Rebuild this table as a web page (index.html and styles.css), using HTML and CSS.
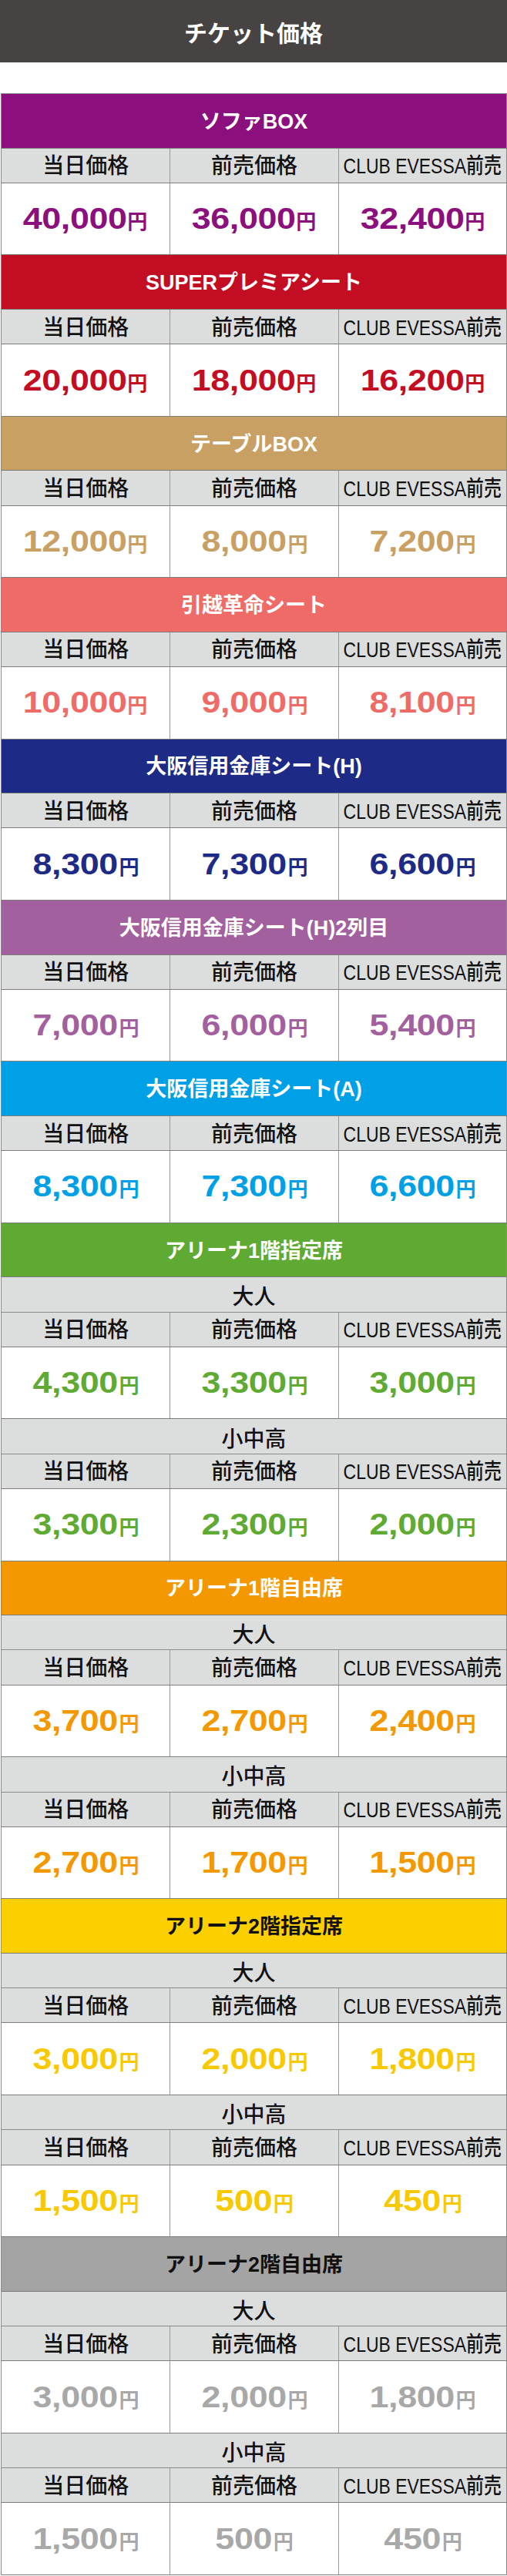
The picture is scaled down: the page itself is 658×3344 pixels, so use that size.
FILE: index.html
```html
<!DOCTYPE html>
<html lang="ja">
<head>
<meta charset="utf-8">
<title>チケット価格</title>
<link rel="stylesheet" href="styles.css">
</head>
<body>
<h1 class="page-title">チケット価格</h1>
<div class="ticket-table">

  <section class="seat seat--sofa">
    <h2 class="seat-name">ソファBOX</h2>
    <div class="row labels"><div class="cell">当日価格</div><div class="cell">前売価格</div><div class="cell"><span class="club">CLUB EVESSA前売</span></div></div>
    <div class="row prices"><div class="cell"><span class="amount">40,000<span class="yen">円</span></span></div><div class="cell"><span class="amount">36,000<span class="yen">円</span></span></div><div class="cell"><span class="amount">32,400<span class="yen">円</span></span></div></div>
  </section>

  <section class="seat seat--super">
    <h2 class="seat-name">SUPERプレミアシート</h2>
    <div class="row labels"><div class="cell">当日価格</div><div class="cell">前売価格</div><div class="cell"><span class="club">CLUB EVESSA前売</span></div></div>
    <div class="row prices"><div class="cell"><span class="amount">20,000<span class="yen">円</span></span></div><div class="cell"><span class="amount">18,000<span class="yen">円</span></span></div><div class="cell"><span class="amount">16,200<span class="yen">円</span></span></div></div>
  </section>

  <section class="seat seat--table">
    <h2 class="seat-name">テーブルBOX</h2>
    <div class="row labels"><div class="cell">当日価格</div><div class="cell">前売価格</div><div class="cell"><span class="club">CLUB EVESSA前売</span></div></div>
    <div class="row prices"><div class="cell"><span class="amount">12,000<span class="yen">円</span></span></div><div class="cell"><span class="amount">8,000<span class="yen">円</span></span></div><div class="cell"><span class="amount">7,200<span class="yen">円</span></span></div></div>
  </section>

  <section class="seat seat--hikkoshi">
    <h2 class="seat-name">引越革命シート</h2>
    <div class="row labels"><div class="cell">当日価格</div><div class="cell">前売価格</div><div class="cell"><span class="club">CLUB EVESSA前売</span></div></div>
    <div class="row prices"><div class="cell"><span class="amount">10,000<span class="yen">円</span></span></div><div class="cell"><span class="amount">9,000<span class="yen">円</span></span></div><div class="cell"><span class="amount">8,100<span class="yen">円</span></span></div></div>
  </section>

  <section class="seat seat--shinkin-h">
    <h2 class="seat-name">大阪信用金庫シート(H)</h2>
    <div class="row labels"><div class="cell">当日価格</div><div class="cell">前売価格</div><div class="cell"><span class="club">CLUB EVESSA前売</span></div></div>
    <div class="row prices"><div class="cell"><span class="amount">8,300<span class="yen">円</span></span></div><div class="cell"><span class="amount">7,300<span class="yen">円</span></span></div><div class="cell"><span class="amount">6,600<span class="yen">円</span></span></div></div>
  </section>

  <section class="seat seat--shinkin-h2">
    <h2 class="seat-name">大阪信用金庫シート(H)2列目</h2>
    <div class="row labels"><div class="cell">当日価格</div><div class="cell">前売価格</div><div class="cell"><span class="club">CLUB EVESSA前売</span></div></div>
    <div class="row prices"><div class="cell"><span class="amount">7,000<span class="yen">円</span></span></div><div class="cell"><span class="amount">6,000<span class="yen">円</span></span></div><div class="cell"><span class="amount">5,400<span class="yen">円</span></span></div></div>
  </section>

  <section class="seat seat--shinkin-a">
    <h2 class="seat-name">大阪信用金庫シート(A)</h2>
    <div class="row labels"><div class="cell">当日価格</div><div class="cell">前売価格</div><div class="cell"><span class="club">CLUB EVESSA前売</span></div></div>
    <div class="row prices"><div class="cell"><span class="amount">8,300<span class="yen">円</span></span></div><div class="cell"><span class="amount">7,300<span class="yen">円</span></span></div><div class="cell"><span class="amount">6,600<span class="yen">円</span></span></div></div>
  </section>

  <section class="seat seat--arena1-reserved">
    <h2 class="seat-name">アリーナ1階指定席</h2>
    <div class="age">大人</div>
    <div class="row labels"><div class="cell">当日価格</div><div class="cell">前売価格</div><div class="cell"><span class="club">CLUB EVESSA前売</span></div></div>
    <div class="row prices"><div class="cell"><span class="amount">4,300<span class="yen">円</span></span></div><div class="cell"><span class="amount">3,300<span class="yen">円</span></span></div><div class="cell"><span class="amount">3,000<span class="yen">円</span></span></div></div>
    <div class="age">小中高</div>
    <div class="row labels"><div class="cell">当日価格</div><div class="cell">前売価格</div><div class="cell"><span class="club">CLUB EVESSA前売</span></div></div>
    <div class="row prices"><div class="cell"><span class="amount">3,300<span class="yen">円</span></span></div><div class="cell"><span class="amount">2,300<span class="yen">円</span></span></div><div class="cell"><span class="amount">2,000<span class="yen">円</span></span></div></div>
  </section>

  <section class="seat seat--arena1-free">
    <h2 class="seat-name">アリーナ1階自由席</h2>
    <div class="age">大人</div>
    <div class="row labels"><div class="cell">当日価格</div><div class="cell">前売価格</div><div class="cell"><span class="club">CLUB EVESSA前売</span></div></div>
    <div class="row prices"><div class="cell"><span class="amount">3,700<span class="yen">円</span></span></div><div class="cell"><span class="amount">2,700<span class="yen">円</span></span></div><div class="cell"><span class="amount">2,400<span class="yen">円</span></span></div></div>
    <div class="age">小中高</div>
    <div class="row labels"><div class="cell">当日価格</div><div class="cell">前売価格</div><div class="cell"><span class="club">CLUB EVESSA前売</span></div></div>
    <div class="row prices"><div class="cell"><span class="amount">2,700<span class="yen">円</span></span></div><div class="cell"><span class="amount">1,700<span class="yen">円</span></span></div><div class="cell"><span class="amount">1,500<span class="yen">円</span></span></div></div>
  </section>

  <section class="seat seat--arena2-reserved">
    <h2 class="seat-name">アリーナ2階指定席</h2>
    <div class="age">大人</div>
    <div class="row labels"><div class="cell">当日価格</div><div class="cell">前売価格</div><div class="cell"><span class="club">CLUB EVESSA前売</span></div></div>
    <div class="row prices"><div class="cell"><span class="amount">3,000<span class="yen">円</span></span></div><div class="cell"><span class="amount">2,000<span class="yen">円</span></span></div><div class="cell"><span class="amount">1,800<span class="yen">円</span></span></div></div>
    <div class="age">小中高</div>
    <div class="row labels"><div class="cell">当日価格</div><div class="cell">前売価格</div><div class="cell"><span class="club">CLUB EVESSA前売</span></div></div>
    <div class="row prices"><div class="cell"><span class="amount">1,500<span class="yen">円</span></span></div><div class="cell"><span class="amount">500<span class="yen">円</span></span></div><div class="cell"><span class="amount">450<span class="yen">円</span></span></div></div>
  </section>

  <section class="seat seat--arena2-free">
    <h2 class="seat-name">アリーナ2階自由席</h2>
    <div class="age">大人</div>
    <div class="row labels"><div class="cell">当日価格</div><div class="cell">前売価格</div><div class="cell"><span class="club">CLUB EVESSA前売</span></div></div>
    <div class="row prices"><div class="cell"><span class="amount">3,000<span class="yen">円</span></span></div><div class="cell"><span class="amount">2,000<span class="yen">円</span></span></div><div class="cell"><span class="amount">1,800<span class="yen">円</span></span></div></div>
    <div class="age">小中高</div>
    <div class="row labels"><div class="cell">当日価格</div><div class="cell">前売価格</div><div class="cell"><span class="club">CLUB EVESSA前売</span></div></div>
    <div class="row prices"><div class="cell"><span class="amount">1,500<span class="yen">円</span></span></div><div class="cell"><span class="amount">500<span class="yen">円</span></span></div><div class="cell"><span class="amount">450<span class="yen">円</span></span></div></div>
  </section>

</div>
</body>
</html>
```

FILE: styles.css
```css
* {
  box-sizing: border-box;
}

html, body {
  margin: 0;
  padding: 0;
  background: #ffffff;
}

body {
  width: 658px;
  font-family: "Liberation Sans", "Noto Sans CJK JP", sans-serif;
  color: #111111;
}

.page-title {
  margin: 0;
  height: 81px;
  background: #474342;
  color: #ffffff;
  font-family: "Noto Sans CJK JP", sans-serif;
  font-weight: 700;
  font-size: 30px;
  line-height: 1;
  display: flex;
  align-items: center;
  justify-content: center;
  padding-top: 1px;
}

.ticket-table {
  margin: 40px 0 0 1px;
  width: 657px;
  border: 1px solid #8a8a8a;
  border-bottom: none;
}

.seat-name {
  margin: 0;
  height: 70.6px;
  background: var(--c);
  color: #ffffff;
  font-family: "Liberation Sans", "Noto Sans CJK JP", sans-serif;
  font-weight: 700;
  font-size: 27px;
  line-height: 1;
  display: flex;
  align-items: center;
  justify-content: center;
  padding-top: 3px;
  border-bottom: 1px solid #7a7a7a;
}

.age {
  height: 45.3px;
  background: #dcdddd;
  font-family: "Noto Sans CJK JP", sans-serif;
  font-weight: 500;
  font-size: 28px;
  line-height: 1;
  display: flex;
  align-items: center;
  justify-content: center;
  padding-top: 2px;
  border-bottom: 1px solid #8c8c8c;
}

.row {
  display: grid;
  grid-template-columns: 1fr 1fr 1fr;
  border-bottom: 1px solid #7e7e7e;
}

.cell {
  display: flex;
  align-items: center;
  justify-content: center;
  overflow: hidden;
  white-space: nowrap;
}

.cell + .cell {
  border-left: 1px solid #9a9a9a;
}

.labels {
  height: 45.3px;
  background: #dcdddd;
}

.labels .cell {
  font-family: "Liberation Sans", "Noto Sans CJK JP", sans-serif;
  font-weight: 500;
  font-size: 28px;
  line-height: 1;
  padding-top: 3px;
}

.club {
  display: inline-block;
  transform: scaleX(0.82);
}

.prices {
  height: 93.5px;
  background: #ffffff;
}

.amount {
  display: inline-block;
  color: var(--c-text, var(--c));
  font-family: "Liberation Sans", sans-serif;
  font-weight: 700;
  font-size: 38px;
  line-height: 1;
  letter-spacing: -0.3px;
  transform: scaleX(1.18);
}

.yen {
  display: inline-block;
  font-family: "Noto Sans CJK JP", sans-serif;
  font-weight: 700;
  font-size: 26px;
  letter-spacing: 0;
  margin: 0 -2px 0 -1px;
  transform: scaleX(0.85);
}

.seat--sofa { --c: #8b0f7d; }
.seat--super { --c: #c30d23; }
.seat--table { --c: #c9a063; }
.seat--hikkoshi { --c: #ee6b67; }
.seat--shinkin-h { --c: #1d2a86; }
.seat--shinkin-h2 { --c: #a3609f; }
.seat--shinkin-a { --c: #00a0e6; }
.seat--arena1-reserved { --c: #5faa32; }
.seat--arena1-free { --c: #f39800; }
.seat--arena2-reserved { --c: #fcd000; --c-text: #f8c800; }
.seat--arena2-free { --c: #a3a4a3; --c-text: #a8a8a8; }

.seat--arena2-reserved .seat-name,
.seat--arena2-free .seat-name {
  color: #111111;
}
```
